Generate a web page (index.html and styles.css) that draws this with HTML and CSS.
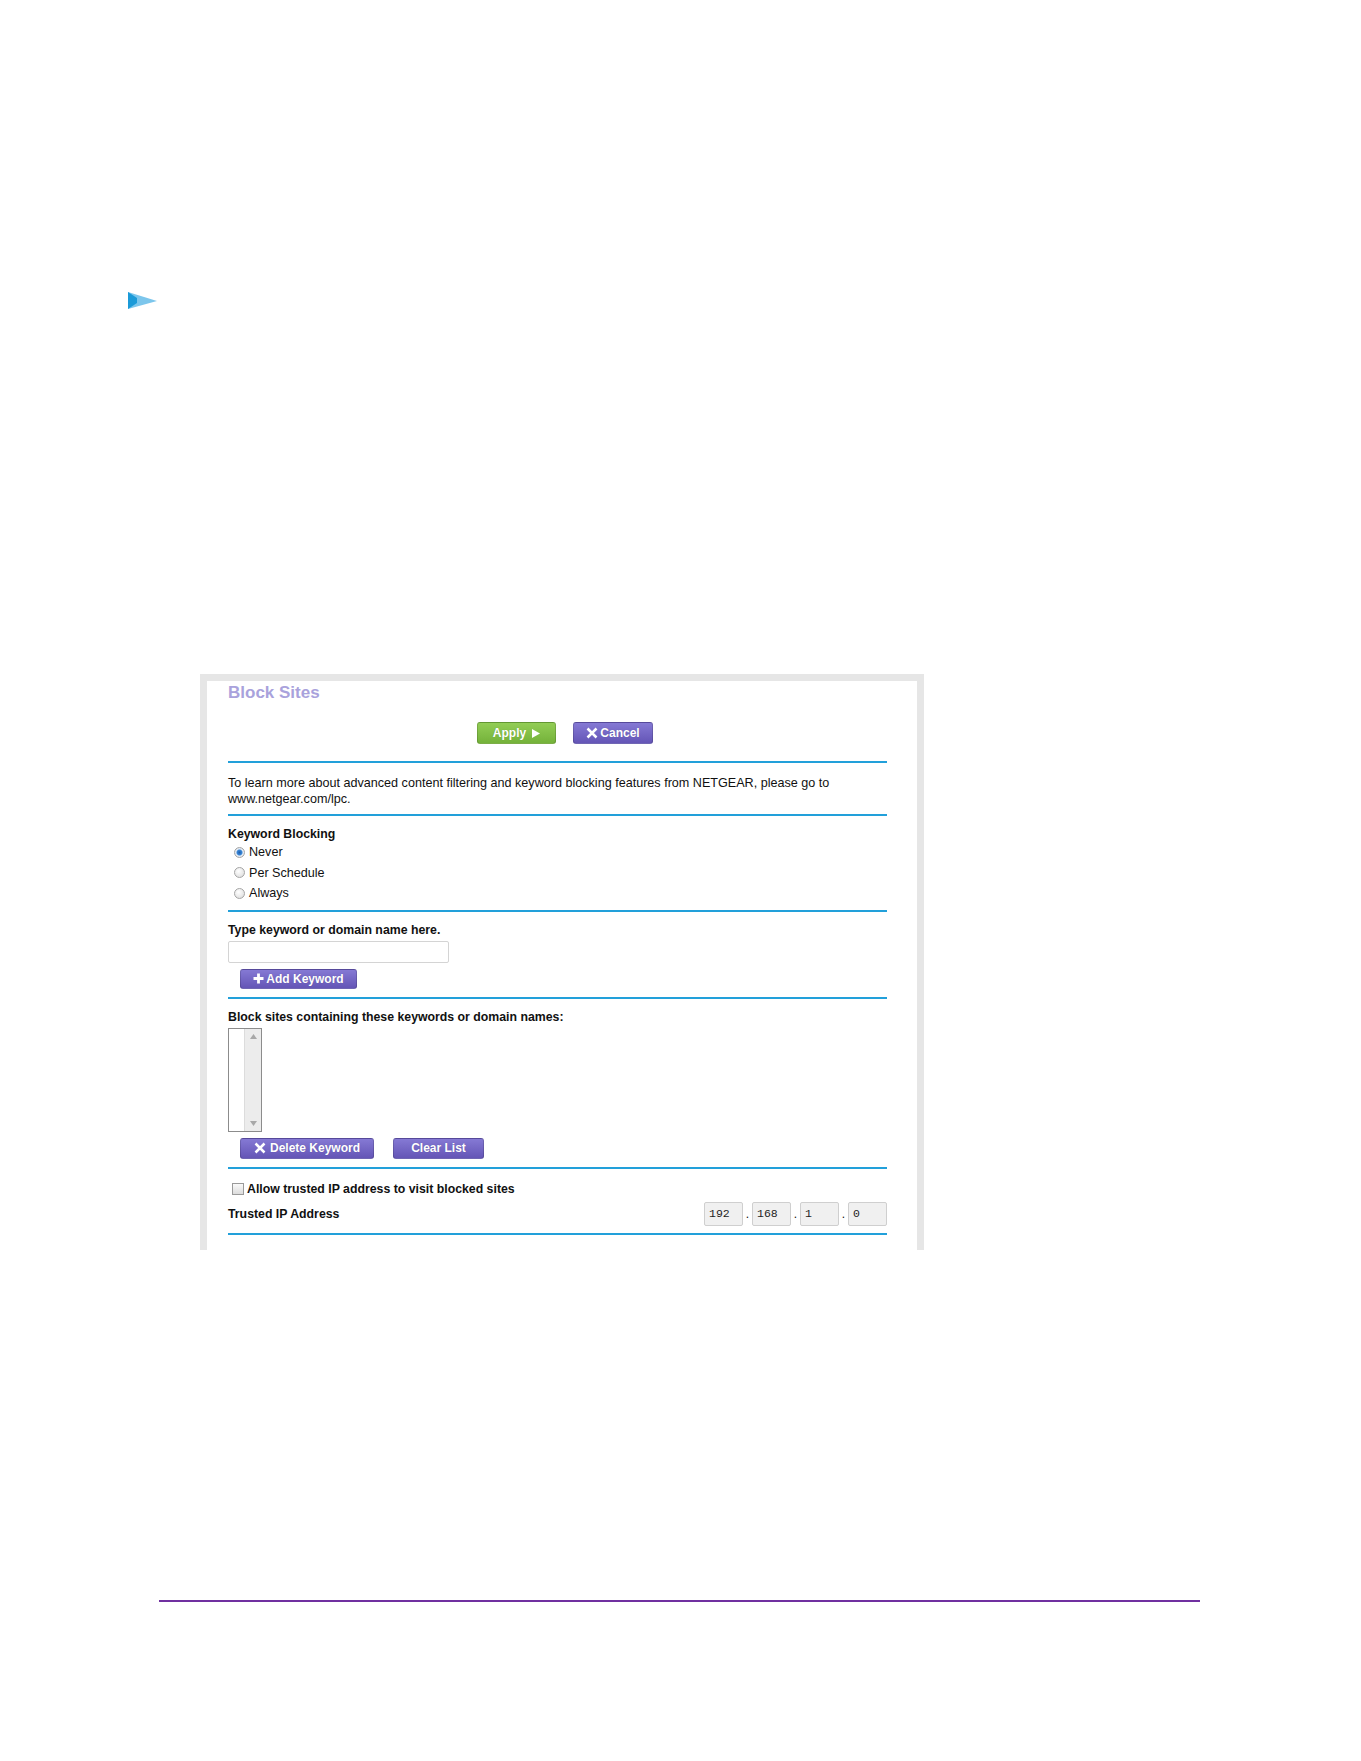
FILE: index.html
```html
<!DOCTYPE html>
<html lang="en">
<head>
    <meta charset="UTF-8">
    <title>Block Sites</title>
    <link rel="stylesheet" href="styles.css">
</head>
<body>
    <div id="page">
        <div id="stepArrow">
            <svg width="30" height="18" viewBox="0 0 30 18">
                <polygon points="0,0 29,9 0,17" fill="#7cc6ec"/>
                <polygon points="0,0 9,6 9,11 0,17" fill="#1b9ad8"/>
            </svg>
        </div>

        <div id="shot">
            <div class="title">Block Sites</div>

            <div class="actions">
                <button class="btn green">Apply
                    <svg width="8" height="9" viewBox="0 0 8 9"><polygon points="0,0 8,4.5 0,9" fill="#fff"/></svg>
                </button>
                <button class="btn purple">
                    <svg width="12" height="12" viewBox="0 0 12 12"><path d="M1.5 1.5 L10.5 10.5 M10.5 1.5 L1.5 10.5" stroke="#fff" stroke-width="2.5"/></svg>Cancel
                </button>
            </div>

            <div class="section info">
                To learn more about advanced content filtering and keyword blocking features from NETGEAR, please go to
                www.netgear.com/lpc.
            </div>

            <div class="section">
                <div class="label">Keyword Blocking</div>
                <label class="radio"><input type="radio" name="kb" checked> Never</label>
                <label class="radio"><input type="radio" name="kb"> Per Schedule</label>
                <label class="radio"><input type="radio" name="kb"> Always</label>
            </div>

            <div class="section">
                <div class="label">Type keyword or domain name here.</div>
                <input type="text" class="keyword">
                <div class="btnrow">
                    <button class="btn purple wide">
                        <svg width="11" height="11" viewBox="0 0 11 11"><path d="M5.5 0.5 V10.5 M0.5 5.5 H10.5" stroke="#fff" stroke-width="2.8"/></svg>Add Keyword
                    </button>
                </div>
            </div>

            <div class="section">
                <div class="label">Block sites containing these keywords or domain names:</div>
                <div class="listbox">
                    <div class="scroll">
                        <svg width="7" height="5" viewBox="0 0 7 5"><polygon points="3.5,0 7,5 0,5" fill="#a8a8a8"/></svg>
                        <svg width="7" height="5" viewBox="0 0 7 5"><polygon points="0,0 7,0 3.5,5" fill="#a8a8a8"/></svg>
                    </div>
                </div>
                <div class="btnrow">
                    <button class="btn purple del">
                        <svg width="12" height="12" viewBox="0 0 12 12"><path d="M1.5 1.5 L10.5 10.5 M10.5 1.5 L1.5 10.5" stroke="#fff" stroke-width="2.5"/></svg> Delete Keyword
                    </button>
                    <button class="btn purple clear">Clear List</button>
                </div>
            </div>

            <div class="section trusted">
                <label class="check"><input type="checkbox"> Allow trusted IP address to visit blocked sites</label>
                <div class="iprow">
                    <span class="label">Trusted IP Address</span>
                    <span class="ip">
                        <input type="text" value="192"><b>.</b><input type="text" value="168"><b>.</b><input type="text" value="1"><b>.</b><input type="text" value="0">
                    </span>
                </div>
            </div>
        </div>

        <div id="footerLine"></div>
    </div>
</body>
</html>
```

FILE: styles.css
```css
body {
    margin: 0;
    background: #fff;
    font-family: "Liberation Sans", Arial, sans-serif;
    color: #111;
}

#page {
    width: 1361px;
    padding-top: 292px;
}

#stepArrow {
    margin-left: 128px;
    height: 18px;
}

#stepArrow svg {
    display: block;
}

#shot {
    margin: 364px 0 0 200px;
    width: 689px;
    height: 569px;
    border: 7px solid #e6e6e6;
    border-bottom: none;
    padding: 0 0 0 21px;
}

.title {
    font-size: 17px;
    font-weight: bold;
    color: #a9a2dc;
    line-height: 20px;
    padding-top: 2px;
}

.actions {
    display: flex;
    gap: 17px;
    padding-left: 249px;
    margin-top: 19px;
    height: 22px;
}

.btn {
    border: 1px solid rgba(0,0,0,0.15);
    border-radius: 3px;
    color: #fff;
    font-family: "Liberation Sans", Arial, sans-serif;
    font-size: 12px;
    font-weight: bold;
    height: 22px;
    padding: 0;
    display: flex;
    align-items: center;
    justify-content: center;
    gap: 2px;
    text-shadow: 0 0 1px rgba(0,0,0,0.2);
}

.green {
    width: 79px;
    background: linear-gradient(#92cd55, #74b23a);
    gap: 6px;
}

.purple {
    width: 80px;
    background: linear-gradient(#8579d4, #6455b6);
}

.wide {
    width: 117px;
    height: 20px;
}

.del {
    width: 134px;
    gap: 4px;
}

.clear {
    width: 91px;
}

.section {
    width: 659px;
    border-top: 2px solid #22a0da;
    font-size: 12.6px;
    line-height: 16px;
}

.actions + .section {
    margin-top: 17px;
}

.info {
    padding: 12px 0 7px;
}

.label {
    font-weight: bold;
    font-size: 12.3px;
}

.section > .label:first-child {
    margin-top: 10px;
}

.radio {
    display: flex;
    align-items: center;
    gap: 4px;
    height: 20.5px;
    padding-left: 6px;
}

.radio:last-child {
    margin-bottom: 6px;
}

.radio input {
    appearance: none;
    margin: 0;
    width: 11px;
    height: 11px;
    border: 1px solid #a5a5a5;
    border-radius: 50%;
    background: radial-gradient(circle at 40% 35%, #fff, #d8d8d8);
}

.radio input:checked {
    background: radial-gradient(circle, #1d5fb0 0, #3a87d6 2.5px, #e8eef6 3.5px, #cfd6de 100%);
}

.keyword {
    display: block;
    margin-top: 3px;
    width: 221px;
    height: 22px;
    box-sizing: border-box;
    border: 1px solid #d4d4d4;
    border-radius: 2px;
}

.btnrow {
    display: flex;
    gap: 19px;
    padding-left: 12px;
    margin-top: 6px;
    margin-bottom: 8px;
}

.listbox {
    margin-top: 3px;
    width: 34px;
    height: 104px;
    box-sizing: border-box;
    border: 1px solid #8c8c8c;
    display: flex;
    justify-content: flex-end;
}

.scroll {
    width: 16px;
    background: #ececec;
    border-left: 1px solid #dcdcdc;
    display: flex;
    flex-direction: column;
    justify-content: space-between;
    align-items: center;
    padding: 5px 0;
}

.btnrow .del, .btnrow .clear {
    height: 21px;
}

.trusted {
    padding-top: 12px;
    padding-bottom: 7px;
    border-bottom: 2px solid #22a0da;
}

.check {
    display: flex;
    align-items: center;
    gap: 3px;
    font-weight: bold;
    font-size: 12.3px;
    padding-left: 4px;
}

.check input {
    appearance: none;
    margin: 0;
    width: 12px;
    height: 12px;
    border: 1px solid #9a9a9a;
    background: linear-gradient(#fafafa, #dcdcdc);
}

.iprow {
    display: flex;
    justify-content: space-between;
    align-items: center;
    margin-top: 5px;
}

.ip {
    display: flex;
    align-items: center;
}

.ip b {
    font-weight: normal;
    width: 9px;
    text-align: center;
    font-size: 12px;
}

.ip input {
    width: 39px;
    height: 24px;
    box-sizing: border-box;
    border: 1px solid #cfcfcf;
    border-radius: 2px;
    background: #f0f0f0;
    font-family: "Liberation Mono", monospace;
    font-size: 11.5px;
    padding: 0 4px;
    color: #222;
}

#footerLine {
    margin: 350px 0 0 159px;
    width: 1041px;
    height: 2px;
    background: #7030a0;
}
```
